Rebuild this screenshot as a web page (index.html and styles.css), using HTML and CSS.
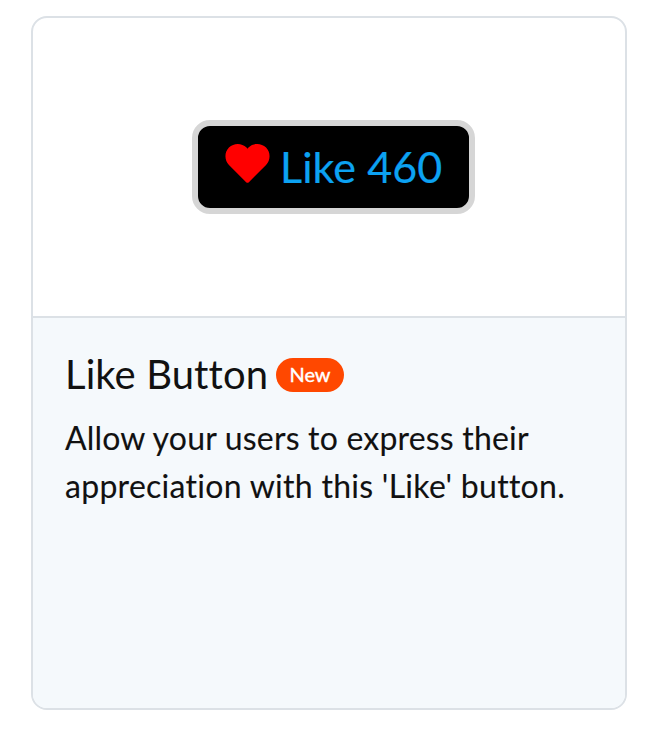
FILE: index.html
```html
<!DOCTYPE html>
<html lang="en">
<head>
	<title>Like Button</title>
	<meta charset="utf-8">
	<link rel="stylesheet" href="styles.css">
</head>
<body>
	<div class="card">
		<div class="preview">
			<button class="like" type="button">
				<svg class="heart" viewBox="0 0 46 42">
					<path d="M21.6 40.2 L4 22.5 C-0.8 17.7 -0.8 9.5 4 4.7 C9 -0.3 17 -0.3 22 4.7 L23 5.8 L24 4.7 C29 -0.3 37 -0.3 42 4.7 C46.8 9.5 46.8 17.7 42 22.5 L24.4 40.2 Q23 41.4 21.6 40.2 Z"/>
				</svg>
				<span class="label">Like 460</span>
			</button>
		</div>
		<div class="info">
			<div class="heading">
				<h2>Like Button</h2>
				<span class="badge">New</span>
			</div>
			<p><span class="line1">Allow your users to express their</span><br><span class="line2">appreciation with this 'Like' button.</span></p>
		</div>
	</div>
</body>
</html>
```

FILE: styles.css
```css
* {
	box-sizing: border-box;
}

body {
	margin: 0;
	padding: 16px 29px 24px 31px;
	background: #FFF;
	font-family: Lato, "Open Sans", sans-serif;
	font-variant-ligatures: none;
	color: #111;
}

.card {
	height: 694px;
	border: 2px solid #DCE1E6;
	border-radius: 16px;
	overflow: hidden;
}

.preview {
	display: flex;
	height: 300px;
	padding: 102px 0 0 159px;
	align-items: flex-start;
	border-bottom: 2px solid #DCE1E6;
}

.like {
	display: flex;
	width: 283px;
	height: 94px;
	padding: 0 0 0 27px;
	align-items: center;
	border: 6px solid #D6D6D6;
	border-radius: 18px;
	background: #000;
	font-family: inherit;
}

.heart {
	width: 45px;
	height: 41px;
	margin: -7px 10px 0 0;
	fill: #F00;
}

.label {
	font-size: 43px;
	line-height: 52px;
	letter-spacing: 0.1px;
	color: #0CA2F2;
	-webkit-text-stroke: 0.2px #0CA2F2;
}

.info {
	height: 390px;
	padding: 32px;
	background: #F5F9FC;
}

.heading {
	display: flex;
	height: 50px;
	align-items: center;
}

h2 {
	width: 203px;
	margin: -2px 8px 0 0;
	font-size: 40px;
	font-weight: 400;
	letter-spacing: 0.1px;
	white-space: nowrap;
}

.badge {
	width: 68px;
	height: 34px;
	border-radius: 17px;
	background: #FF4800;
	color: #FFF;
	font-size: 20px;
	line-height: 33px;
	text-align: center;
	-webkit-text-stroke: 0.4px #FFF;
}

p {
	margin: 14px 0 0;
	font-size: 32px;
	line-height: 48px;
	white-space: nowrap;
	-webkit-text-stroke: 0.1px #111;
}

.line1 {
	letter-spacing: 0.19px;
}

.line2 {
	letter-spacing: 0.28px;
}
```
